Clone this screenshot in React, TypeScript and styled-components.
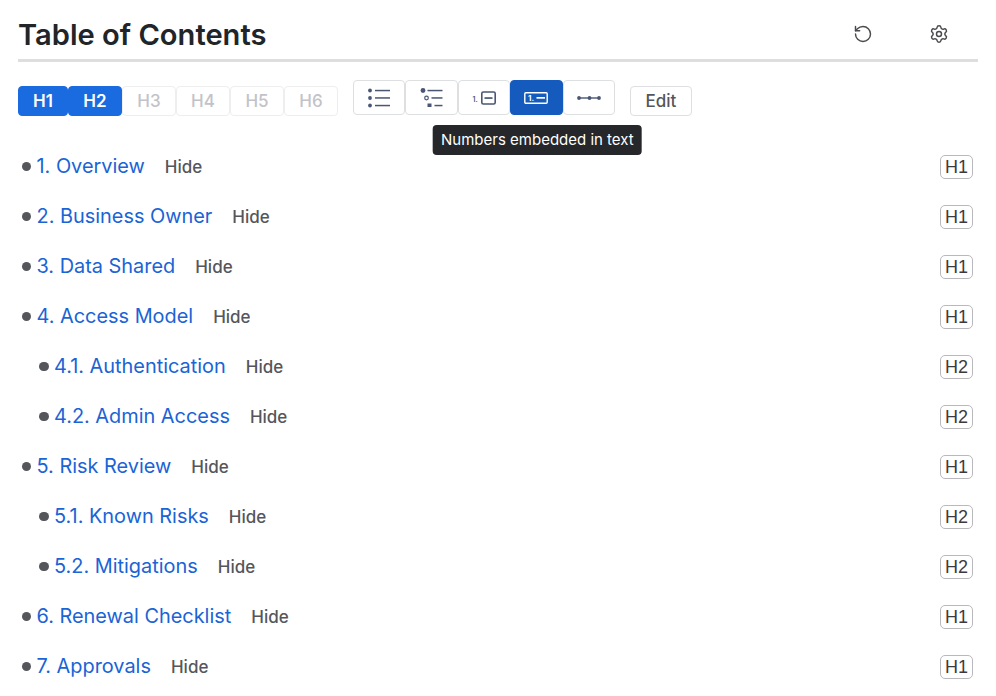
import { RotateCcw, Settings } from 'lucide-react';
import styled, { createGlobalStyle } from 'styled-components';

const GlobalStyle = createGlobalStyle`
    html, body {
        margin: 0;
        padding: 0;
        background: #fff;
        font-family: Inter, "Liberation Sans", sans-serif;
    }
`;

interface TocItem {
    label: string;
    level: 1 | 2;
}

const items: TocItem[] = [
    { label: '1. Overview', level: 1 },
    { label: '2. Business Owner', level: 1 },
    { label: '3. Data Shared', level: 1 },
    { label: '4. Access Model', level: 1 },
    { label: '4.1. Authentication', level: 2 },
    { label: '4.2. Admin Access', level: 2 },
    { label: '5. Risk Review', level: 1 },
    { label: '5.1. Known Risks', level: 2 },
    { label: '5.2. Mitigations', level: 2 },
    { label: '6. Renewal Checklist', level: 1 },
    { label: '7. Approvals', level: 1 },
];

const levels = [1, 2, 3, 4, 5, 6];

const iconColor = '#4a5674';

function BulletsIcon() {
    return (
        <svg width="24" height="20" viewBox="0 0 24 20" fill={iconColor}>
            <circle cx="3" cy="2.5" r="1.9" />
            <circle cx="3" cy="10" r="1.9" />
            <circle cx="3" cy="17.5" r="1.9" />
            <rect x="8" y="1.8" width="15" height="1.5" />
            <rect x="8" y="9.2" width="15" height="1.5" />
            <rect x="8" y="16.8" width="15" height="1.5" />
        </svg>
    );
}

function MixedBulletsIcon() {
    return (
        <svg width="24" height="20" viewBox="0 0 24 20" fill={iconColor}>
            <circle cx="3" cy="2.5" r="2.4" />
            <circle cx="6.5" cy="10" r="1.8" fill="none" stroke={iconColor} strokeWidth="1.2" />
            <rect x="7.5" y="15.5" width="4" height="3.5" />
            <rect x="7.5" y="1.8" width="15" height="1.5" />
            <rect x="11.5" y="9.2" width="11" height="1.5" />
            <rect x="14.5" y="16.8" width="8" height="1.5" />
        </svg>
    );
}

function NumberOutsideIcon() {
    return (
        <svg width="24" height="14" viewBox="0 0 24 14">
            <text x="0.5" y="10.5" fontSize="7" fontWeight="600" fill={iconColor} fontFamily="Inter, sans-serif">1.</text>
            <rect x="9.8" y="1" width="13.4" height="12" rx="1.5" fill="none" stroke={iconColor} strokeWidth="1.6" />
            <rect x="12.5" y="6.2" width="8" height="1.7" fill={iconColor} />
        </svg>
    );
}

function NumberEmbeddedIcon() {
    return (
        <svg width="24" height="12" viewBox="0 0 24 12">
            <rect x="0.8" y="0.8" width="22.4" height="10.4" rx="1" fill="none" stroke="#fff" strokeWidth="1.4" />
            <text x="4" y="9" fontSize="8" fontWeight="700" fill="#fff" fontFamily="Inter, sans-serif">1.</text>
            <rect x="12.5" y="5" width="8.5" height="1.7" fill="#fff" />
        </svg>
    );
}

function ChainIcon() {
    return (
        <svg width="24" height="8" viewBox="0 0 24 8" fill={iconColor}>
            <circle cx="2" cy="4" r="1.9" />
            <circle cx="12.5" cy="4" r="1.9" />
            <circle cx="22" cy="4" r="1.9" />
            <rect x="2" y="3.3" width="20" height="1.4" />
        </svg>
    );
}

export default function App() {
    return (
        <>
            <GlobalStyle />
            <Page>
                <Header>
                    <Title>Table of Contents</Title>
                    <HeaderActions>
                        <IconButton aria-label="Reset"><RotateCcw size={20} strokeWidth={1.75} /></IconButton>
                        <IconButton aria-label="Settings"><Settings size={20} strokeWidth={1.75} /></IconButton>
                    </HeaderActions>
                </Header>
                <Toolbar>
                    <LevelGroup>
                        {levels.map((n) => (
                            <LevelButton key={n} $active={n <= 2} $first={n === 1}>H{n}</LevelButton>
                        ))}
                    </LevelGroup>
                    <StyleGroup>
                        <StyleButton aria-label="Bullets"><BulletsIcon /></StyleButton>
                        <StyleButton aria-label="Mixed bullets"><MixedBulletsIcon /></StyleButton>
                        <StyleButton aria-label="Numbers"><NumberOutsideIcon /></StyleButton>
                        <StyleButton $active aria-label="Numbers embedded in text">
                            <NumberEmbeddedIcon />
                            <Tooltip>Numbers embedded in text</Tooltip>
                        </StyleButton>
                        <StyleButton aria-label="Inline"><ChainIcon /></StyleButton>
                    </StyleGroup>
                    <EditButton>Edit</EditButton>
                </Toolbar>
                <List>
                    {items.map((item) => (
                        <Row key={item.label}>
                            <RowMain $level={item.level}>
                                <Bullet />
                                <EntryLink href="#">{item.label}</EntryLink>
                                <HideLink>Hide</HideLink>
                            </RowMain>
                            <LevelBadge>H{item.level}</LevelBadge>
                        </Row>
                    ))}
                </List>
            </Page>
        </>
    );
}

const Page = styled.div`
    width: 960px;
    height: 696px;
    padding: 0 18px;
    overflow: hidden;
`;

const Header = styled.div`
    display: flex;
    align-items: center;
    justify-content: space-between;
    height: 50px;
    padding-top: 9px;
    border-bottom: 3px solid #dedede;
`;

const Title = styled.h1`
    margin: 2px 0 0;
    font-size: 29.1px;
    line-height: 34px;
    font-weight: 600;
    color: #212529;
`;

const HeaderActions = styled.div`
    display: flex;
    align-items: center;
    gap: 36px;
    margin-right: 19px;
`;

const IconButton = styled.button`
    display: flex;
    width: 40px;
    height: 30px;
    align-items: center;
    justify-content: center;
    padding: 0;
    border: none;
    background: none;
    color: #4b4b4f;
`;

const Toolbar = styled.div`
    display: flex;
    align-items: flex-start;
    margin-top: 18px;
`;

const LevelGroup = styled.div`
    display: flex;
    margin-top: 6px;
`;

const LevelButton = styled.button<{ $active?: boolean; $first?: boolean }>`
    width: ${(p) => (p.$first ? '50px' : '54px')};
    height: 30px;
    padding: 0;
    border: 1px solid ${(p) => (p.$active ? '#1a6ae0' : '#eeeeef')};
    border-radius: 4px;
    background: ${(p) => (p.$active ? '#1a6ae0' : '#fff')};
    color: ${(p) => (p.$active ? '#fff' : '#c2c3c9')};
    font-family: inherit;
    font-size: 17px;
    font-weight: ${(p) => (p.$active ? 600 : 500)};
`;

const StyleGroup = styled.div`
    display: flex;
    margin-left: 15px;
`;

const StyleButton = styled.button<{ $active?: boolean }>`
    position: relative;
    display: flex;
    width: 52.4px;
    height: 35px;
    align-items: center;
    justify-content: center;
    padding: 0;
    border: 1px solid ${(p) => (p.$active ? '#145bbd' : '#dedfe1')};
    border-radius: 4px;
    background: ${(p) => (p.$active ? '#145bbd' : '#fff')};
    font-family: inherit;
`;

const Tooltip = styled.span`
    position: absolute;
    top: 44px;
    left: calc(50% + 1px);
    transform: translateX(-50%);
    padding: 0 8px;
    height: 30px;
    border-radius: 4px;
    background: #26272b;
    color: #fff;
    font-size: 15px;
    line-height: 30px;
    white-space: nowrap;
`;

const EditButton = styled.button`
    width: 62px;
    height: 30px;
    margin: 6px 0 0 15px;
    padding: 0;
    border: 1px solid #dedfe1;
    border-radius: 4px;
    background: #fff;
    color: #55565c;
    font-family: inherit;
    font-size: 17px;
    font-weight: 500;
`;

const List = styled.div`
    display: flex;
    flex-direction: column;
    margin-top: 25px;
`;

const Row = styled.div`
    display: flex;
    align-items: center;
    justify-content: space-between;
    height: 50px;
    padding-right: 5px;
`;

const RowMain = styled.div<{ $level: number }>`
    display: flex;
    align-items: center;
    padding-left: ${(p) => (p.$level === 2 ? '21px' : '3.5px')};
`;

const Bullet = styled.span`
    width: 9.5px;
    height: 9.5px;
    margin: 1px 5.5px 0 0;
    border-radius: 50%;
    background: #55565c;
`;

const EntryLink = styled.a`
    color: #1a64d6;
    font-size: 19.9px;
    line-height: 28px;
    text-decoration: none;
`;

const HideLink = styled.span`
    margin-left: 20px;
    margin-top: 2px;
    color: #55565c;
    font-size: 17px;
    font-weight: 500;
`;

const LevelBadge = styled.span`
    padding: 0 4px;
    height: 22px;
    margin-top: 2px;
    border: 1px solid #b9b9bd;
    border-radius: 5px;
    color: #3b3b3f;
    font-family: "Liberation Sans", sans-serif;
    font-size: 18px;
    line-height: 22px;
`;
